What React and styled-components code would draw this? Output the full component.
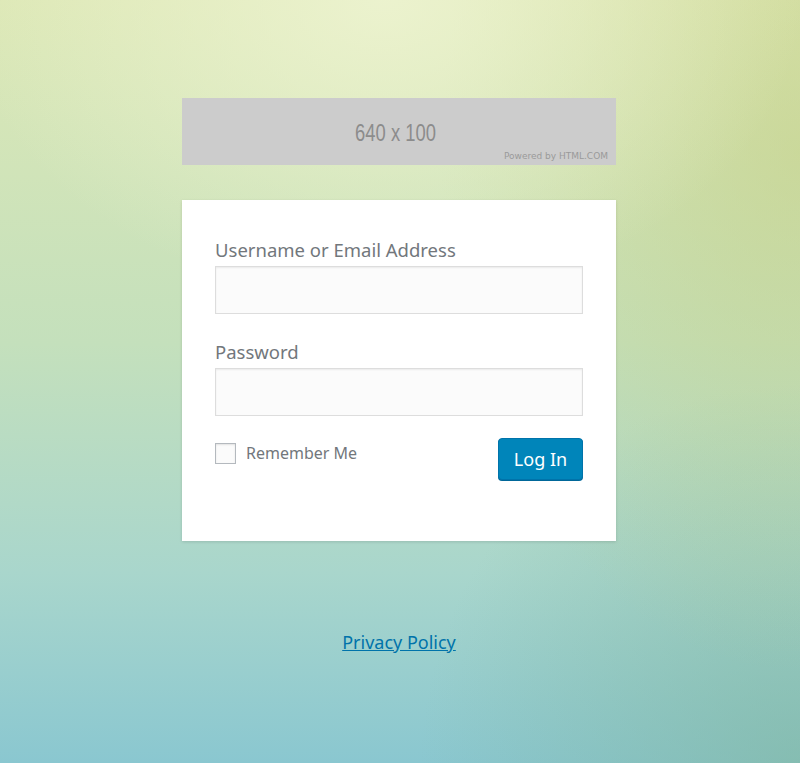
import React from 'react';
import styled, { createGlobalStyle } from 'styled-components';

const GlobalStyle = createGlobalStyle`
  html, body {
    margin: 0;
    padding: 0;
    height: 100%;
  }
  body {
    font-family: "Noto Sans", "Liberation Sans", sans-serif;
    background:
      radial-gradient(ellipse 420px 300px at 48% 0%, rgba(238, 244, 210, 0.85), rgba(238, 244, 210, 0) 100%),
      radial-gradient(ellipse 360px 520px at 100% 20%, rgba(196, 206, 130, 0.55), rgba(196, 206, 130, 0) 100%),
      radial-gradient(ellipse 380px 380px at 100% 100%, rgba(130, 182, 158, 0.6), rgba(130, 182, 158, 0) 100%),
      linear-gradient(180deg, #dde8b6 0%, #c4e0bc 45%, #a9d6cc 75%, #8ac7d0 100%);
    background-attachment: fixed;
    min-height: 763px;
  }
`;

const Page = styled.div`
  display: flex;
  flex-direction: column;
  align-items: center;
  padding-top: 98px;
  padding-right: 2px;
  min-height: 665px;
`;

const Banner = styled.div`
  box-sizing: border-box;
  width: 434px;
  height: 67px;
  background: #cccccc;
  display: flex;
  flex-direction: column;
  align-items: center;
  justify-content: center;
  position: relative;
`;

const BannerSize = styled.span`
  font-family: "Liberation Sans", Arial, sans-serif;
  font-size: 23px;
  color: #8c8c8c;
  transform: translate(-3px, 2px) scaleX(0.8);
`;

const BannerCredit = styled.span`
  position: absolute;
  right: 8px;
  bottom: 4px;
  font-family: "DejaVu Sans", sans-serif;
  font-size: 9px;
  color: #9a9a9a;
`;

const Card = styled.form`
  box-sizing: border-box;
  width: 434px;
  height: 341px;
  margin-top: 35px;
  background: #ffffff;
  box-shadow: 0 1px 3px rgba(0, 0, 0, 0.13);
  padding: 38px 33px 0;
`;

const Field = styled.div`
  display: flex;
  flex-direction: column;
  margin-bottom: ${(p) => p.$gap}px;
`;

const Label = styled.label`
  font-size: 18.5px;
  color: #72777c;
  line-height: 24px;
  margin-bottom: 4px;
`;

const Input = styled.input`
  box-sizing: border-box;
  width: 368px;
  height: 48px;
  border: 1px solid #dddddd;
  background: #fbfbfb;
  box-shadow: inset 0 1px 2px rgba(0, 0, 0, 0.07);
  font-size: 24px;
  padding: 3px 5px;
  outline: none;
`;

const Actions = styled.div`
  display: flex;
  justify-content: space-between;
  align-items: flex-start;
  margin-top: 22px;
`;

const Remember = styled.label`
  display: flex;
  align-items: center;
  gap: 10px;
  font-size: 16px;
  color: #72777c;
  margin-top: 4px;
`;

const Check = styled.span`
  box-sizing: border-box;
  width: 21px;
  height: 21px;
  border: 1px solid #b4b9be;
  background: #fbfbfb;
  box-shadow: inset 0 1px 2px rgba(0, 0, 0, 0.1);
`;

const Button = styled.button`
  box-sizing: border-box;
  width: 85px;
  height: 42px;
  background: #0085ba;
  border: 1px solid #0073aa;
  border-radius: 4px;
  box-shadow: 0 1px 0 #006799;
  color: #ffffff;
  font-family: "Noto Sans", "Liberation Sans", sans-serif;
  font-size: 18px;
  padding: 0;
  cursor: pointer;
`;

const Footer = styled.p`
  margin: 89px 0 0;
  font-size: 18px;
`;

const Link = styled.a`
  color: #0073aa;
  text-decoration: underline;
`;

export default function App() {
  return (
    <>
      <GlobalStyle />
      <Page>
        <Banner>
          <BannerSize>640 x 100</BannerSize>
          <BannerCredit>Powered by HTML.COM</BannerCredit>
        </Banner>
        <Card onSubmit={(e) => e.preventDefault()}>
          <Field $gap={26}>
            <Label htmlFor="user">Username or Email Address</Label>
            <Input id="user" type="text" />
          </Field>
          <Field $gap={0}>
            <Label htmlFor="pass">Password</Label>
            <Input id="pass" type="password" />
          </Field>
          <Actions>
            <Remember>
              <Check />
              Remember Me
            </Remember>
            <Button type="submit">Log In</Button>
          </Actions>
        </Card>
        <Footer>
          <Link href="#">Privacy Policy</Link>
        </Footer>
      </Page>
    </>
  );
}
